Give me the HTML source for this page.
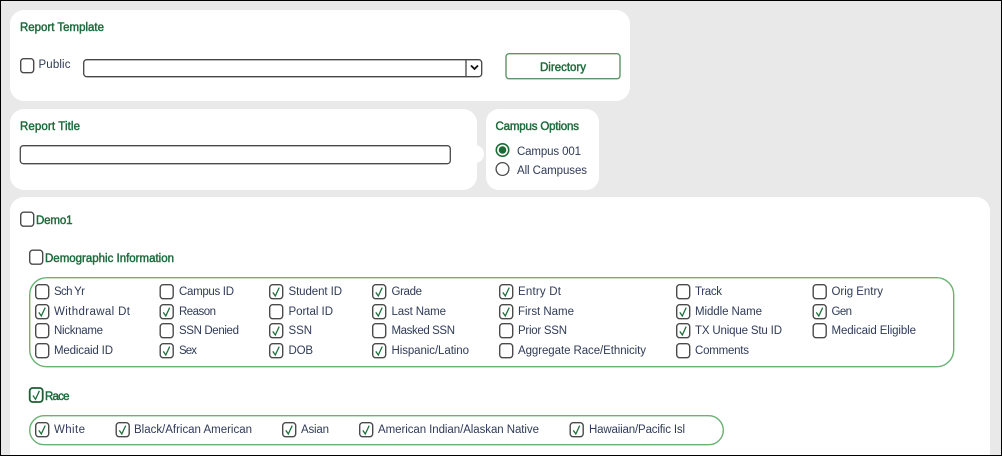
<!DOCTYPE html>
<html><head><meta charset="utf-8"><style>
html,body{margin:0;padding:0;background:#e9e9e9;overflow:hidden}
svg{display:block;filter:blur(.3px)}
text{font-family:"Liberation Sans",sans-serif;font-size:11.5px;fill:#2f3b58}
.t,.d{fill:#1f6b3d;stroke:#1f6b3d;stroke-width:.45px}
</style></head><body>
<svg width="1002" height="456" viewBox="0 0 1002 456" xmlns="http://www.w3.org/2000/svg">
<defs>
<g id="b"><rect x="0.7" y="0.7" width="13" height="14" rx="3" fill="#fff" stroke="#4a4a4a" stroke-width="1.4"/></g>
<g id="c"><rect x="0.7" y="0.7" width="13" height="14" rx="3" fill="#fff" stroke="#4a4a4a" stroke-width="1.4"/><path d="M3.8 8.4 L6.3 12 L10.2 3.6" fill="none" stroke="#1c6e3a" stroke-width="1.3"/></g>
</defs>
<rect width="1002" height="456" fill="#e9e9e9"/>
<rect x="10" y="10" width="620" height="91" rx="14" fill="#fff"/>
<rect x="10" y="109" width="467" height="81" rx="14" fill="#fff"/>
<circle cx="475" cy="154" r="9" fill="#fff"/>
<rect x="486" y="109" width="113" height="81" rx="13" fill="#fff"/>
<rect x="10" y="197" width="980" height="270" rx="14" fill="#fff"/>

<text class="t" x="20" y="31" textLength="84">Report Template</text>
<use href="#b" x="20" y="58"/><text x="38.5" y="68" textLength="32">Public</text>
<rect x="83.7" y="59.7" width="398" height="17" rx="3" fill="#fff" stroke="#444" stroke-width="1.3"/>
<path d="M466 60 V77" stroke="#444" stroke-width="1.3"/>
<path d="M471 65.5 L474.5 69 L478 65.5" fill="none" stroke="#111" stroke-width="1.8"/>
<rect x="506" y="53.7" width="114" height="25" rx="3" fill="#fff" stroke="#5f9468" stroke-width="1.4"/>
<text class="t" x="540" y="71" textLength="46">Directory</text>

<text class="t" x="20" y="130" textLength="60">Report Title</text>
<rect x="20.3" y="145.7" width="430" height="18" rx="3" fill="#fff" stroke="#4a4a4a" stroke-width="1.3"/>

<text class="t" x="495.5" y="130" textLength="83.5">Campus Options</text>
<circle cx="502.5" cy="150" r="6.2" fill="#fff" stroke="#1d6b34" stroke-width="1.6"/><circle cx="502.5" cy="150" r="3.8" fill="#1d6b34"/>
<text x="517" y="155" textLength="64">Campus 001</text>
<circle cx="502.5" cy="169" r="6.4" fill="#fff" stroke="#4a4a4a" stroke-width="1.3"/>
<text x="517" y="174" textLength="70">All Campuses</text>

<use href="#b" x="20" y="211.5"/><text class="d" x="36" y="224" textLength="36.5">Demo1</text>
<use href="#b" x="29" y="249.5"/><text class="d" x="45" y="262" textLength="129">Demographic Information</text>

<rect x="29.7" y="277.7" width="924" height="89" rx="17" fill="#fff" stroke="#6cb174" stroke-width="1.4"/>

<use href="#b" x="35" y="284"/><text x="54" y="295" textLength="31">Sch Yr</text>
<use href="#b" x="159.5" y="284"/><text x="179" y="295" textLength="55">Campus ID</text>
<use href="#c" x="269" y="284"/><text x="288.5" y="295" textLength="53.5">Student ID</text>
<use href="#c" x="372" y="284"/><text x="391.5" y="295" textLength="30.5">Grade</text>
<use href="#c" x="499" y="284"/><text x="518" y="295" textLength="43">Entry Dt</text>
<use href="#b" x="676" y="284"/><text x="695" y="295" textLength="27">Track</text>
<use href="#b" x="812.5" y="284"/><text x="831.5" y="295" textLength="51.5">Orig Entry</text>

<use href="#c" x="35" y="304"/><text x="54" y="315" textLength="76">Withdrawal Dt</text>
<use href="#c" x="159.5" y="304"/><text x="179" y="315" textLength="37">Reason</text>
<use href="#b" x="269" y="304"/><text x="288.5" y="315" textLength="44.5">Portal ID</text>
<use href="#c" x="372" y="304"/><text x="391.5" y="315" textLength="54.5">Last Name</text>
<use href="#c" x="499" y="304"/><text x="518" y="315" textLength="56">First Name</text>
<use href="#c" x="676" y="304"/><text x="695" y="315" textLength="67">Middle Name</text>
<use href="#c" x="812.5" y="304"/><text x="831.5" y="315" textLength="20.5">Gen</text>

<use href="#b" x="35" y="323"/><text x="54" y="334" textLength="49">Nickname</text>
<use href="#b" x="159.5" y="323"/><text x="179" y="334" textLength="60">SSN Denied</text>
<use href="#c" x="269" y="323"/><text x="288.5" y="334" textLength="23.5">SSN</text>
<use href="#b" x="372" y="323"/><text x="391.5" y="334" textLength="63.5">Masked SSN</text>
<use href="#b" x="499" y="323"/><text x="518" y="334" textLength="49">Prior SSN</text>
<use href="#c" x="676" y="323"/><text x="695" y="334" textLength="87">TX Unique Stu ID</text>
<use href="#b" x="812.5" y="323"/><text x="831.5" y="334" textLength="84.5">Medicaid Eligible</text>

<use href="#b" x="35" y="343"/><text x="54" y="354" textLength="59">Medicaid ID</text>
<use href="#c" x="159.5" y="343"/><text x="179" y="354" textLength="18">Sex</text>
<use href="#c" x="269" y="343"/><text x="288.5" y="354" textLength="24.5">DOB</text>
<use href="#c" x="372" y="343"/><text x="391.5" y="354" textLength="77.5">Hispanic/Latino</text>
<use href="#b" x="499" y="343"/><text x="518" y="354" textLength="128">Aggregate Race/Ethnicity</text>
<use href="#b" x="676" y="343"/><text x="695" y="354" textLength="54">Comments</text>

<rect x="29.7" y="388" width="13" height="14" rx="3" fill="#fff" stroke="#1d5e34" stroke-width="1.8"/>
<path d="M33 395.5 L35.5 399.3 L39.4 390.8" fill="none" stroke="#1c6e3a" stroke-width="1.3"/>
<text class="d" x="45" y="400" textLength="24.5">Race</text>

<rect x="29.7" y="415.7" width="693.6" height="29" rx="14.5" fill="#fff" stroke="#6cb174" stroke-width="1.4"/>
<use href="#c" x="35" y="422"/><text x="54" y="433" textLength="31">White</text>
<use href="#c" x="115.5" y="422"/><text x="134" y="433" textLength="118">Black/African American</text>
<use href="#c" x="282" y="422"/><text x="301" y="433" textLength="28">Asian</text>
<use href="#c" x="359" y="422"/><text x="378" y="433" textLength="161">American Indian/Alaskan Native</text>
<use href="#c" x="569.5" y="422"/><text x="589" y="433" textLength="96">Hawaiian/Pacific Isl</text>

<path d="M0 0.5 H1002 M0.5 0 V456 M1001.5 0 V456 M0 455.5 H1002" stroke="#000" stroke-width="1" fill="none"/>
</svg>
</body></html>
